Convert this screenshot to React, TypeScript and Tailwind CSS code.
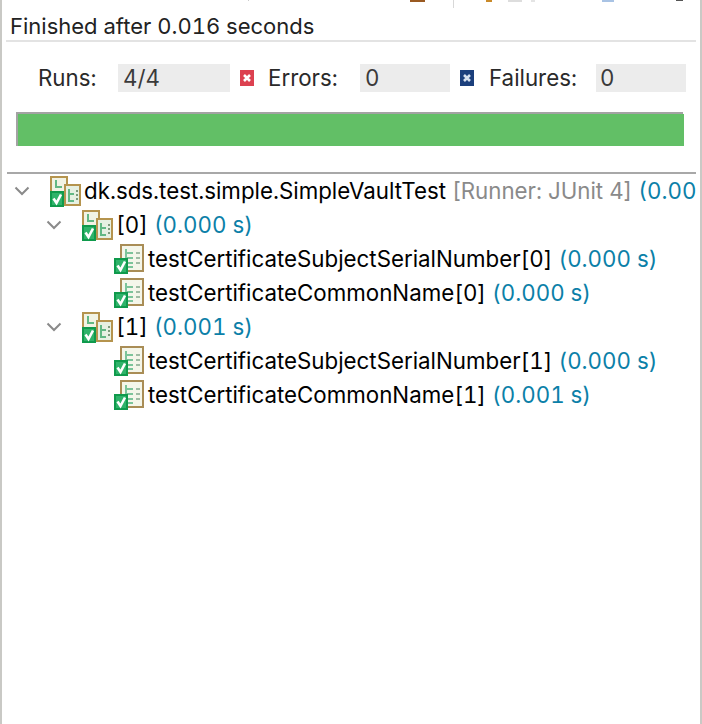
const font = { fontFamily: '"Inter", "Liberation Sans", sans-serif' };

function ChevronDown() {
  return (
    <svg width="16" height="10" viewBox="0 0 16 10" className="shrink-0">
      <path d="M1.5 1.5 L8 8 L14.5 1.5" fill="none" stroke="#8a8a8a" strokeWidth="2" />
    </svg>
  );
}

function SuiteIcon() {
  return (
    <svg width="31" height="31" viewBox="0 0 31 31" className="shrink-0">
      <rect x="1" y="1" width="16" height="17" fill="#f1f3e4" stroke="#b5944e" strokeWidth="2" />
      <path d="M6 4v7h6" fill="none" stroke="#62b884" strokeWidth="2" />
      <rect x="15" y="9" width="15" height="20" fill="#e6f0e2" stroke="#b5944e" strokeWidth="2" />
      <path d="M19 13v12h5M19 18h5" fill="none" stroke="#62b884" strokeWidth="2" />
      <path d="M26 15h2M26 19h2M26 23h2" stroke="#7d9a7c" strokeWidth="2" />
      <rect x="0" y="15" width="14" height="16" fill="#2fb36a" />
      <rect x="1" y="16" width="12" height="14" fill="none" stroke="#0f9a4c" strokeWidth="2" />
      <path d="M3.5 22.5 L6.5 27 L11 18.5" fill="none" stroke="#ffffff" strokeWidth="2.6" />
    </svg>
  );
}

function TestIcon() {
  return (
    <svg width="31" height="31" viewBox="0 0 31 31" className="shrink-0">
      <rect x="7" y="1" width="22" height="26" fill="#f4f6ea" stroke="#a98d56" strokeWidth="2" />
      <path d="M12 5v18h7M12 9h7M12 14h7M12 19h7" fill="none" stroke="#7cc49a" strokeWidth="2" />
      <path d="M22 9h4M22 14h4M22 19h4" stroke="#a0bca4" strokeWidth="2" />
      <rect x="0" y="14" width="14" height="16" fill="#2fb36a" />
      <rect x="1" y="15" width="12" height="14" fill="none" stroke="#0f9a4c" strokeWidth="2" />
      <path d="M3.5 21.5 L6.5 26 L11 17.5" fill="none" stroke="#ffffff" strokeWidth="2.6" />
    </svg>
  );
}

function XBox({ bg, fg }: { bg: string; fg: string }) {
  return (
    <svg width="14" height="16" viewBox="0 0 14 16" className="shrink-0">
      <rect width="14" height="16" fill={bg} />
      <path d="M4 5 L10 11 M10 5 L4 11" stroke={fg} strokeWidth="2.6" />
    </svg>
  );
}

function Row({ indent, icon, children }: { indent: string; icon: React.ReactNode; children: React.ReactNode }) {
  return (
    <div className={`h-[34px] flex items-center whitespace-nowrap ${indent}`}>
      {icon}
      <span className="ml-[3px] shrink-0 text-black">{children}</span>
    </div>
  );
}

const Time = ({ children }: { children: string }) => <span className="text-[#0b80a8]"> {children}</span>;

export default function App() {
  return (
    <div className="w-[702px] h-[724px] bg-white border-x-2 border-[#c9c9c5] overflow-hidden text-[22.3px] leading-none tabular-nums" style={font}>
      <div className="h-2 flex items-start">
        <span className="ml-[246px] w-px h-px bg-[#cccccc]" />
        <span className="ml-[161px] w-[15px] h-[2px] bg-[#9a5a22]" />
        <span className="ml-7 w-px h-2 bg-[#d8d8d8]" />
        <span className="ml-8 w-[6px] h-[2px] bg-[#c98a2a]" />
        <span className="ml-4 w-[14px] h-[2px] bg-[#dddddd]" />
        <span className="ml-[9px] w-1 h-[2px] bg-[#e4e4e4]" />
        <span className="ml-[67px] w-3 h-[2px] bg-[#a9c3e4]" />
        <span className="ml-[62px] w-[7px] h-px bg-[#555555]" />
      </div>
      <div className="h-[32px] flex items-center pt-1 pl-2 text-[22px] text-[#222222]">Finished after 0.016 seconds</div>
      <div className="mx-1 h-[2px] bg-[#e3e3e3]" />

      <div className="mt-[22px] flex items-center">
        <span className="ml-[36px] w-[80px] text-[#2a2a2a]">Runs:</span>
        <span className="w-[112px] h-7 flex items-center pl-[5px] bg-[#ececec] text-[#3a3a3a]">4/4</span>
        <div className="ml-[10px] flex items-center">
          <XBox bg="#dc4150" fg="#ffffff" />
          <span className="ml-[14px] w-[92px] text-[#2a2a2a]">Errors:</span>
          <span className="w-[90px] h-7 flex items-center pl-[5px] bg-[#ececec] text-[#3a3a3a]">0</span>
        </div>
        <div className="ml-[10px] flex items-center">
          <XBox bg="#1b3f7c" fg="#d6e0ee" />
          <span className="ml-[15px] w-[107px] text-[#2a2a2a]">Failures:</span>
          <span className="w-[90px] h-7 flex items-center pl-[4px] bg-[#ececec] text-[#3a3a3a]">0</span>
        </div>
      </div>

      <div className="mt-[20px] ml-[14px] w-[667px] h-[34px] border-t-2 border-l-2 border-[#a3a3a3]">
        <div className="h-8 -mr-px bg-[#62bf66]" />
      </div>

      <div className="mt-[26px] ml-[5px] mr-1 h-[2px] bg-[#a8a8a8]" />

      <div className="mr-[4px] overflow-hidden">
        <Row indent="pl-3" icon={<><ChevronDown /><span className="w-5 shrink-0" /><SuiteIcon /></>}>
          dk.sds.test.simple.SimpleVaultTest <span className="text-[#8a8a8a]">[Runner: JUnit 4]</span><Time>(0.000 s)</Time>
        </Row>
        <Row indent="pl-[44px]" icon={<><ChevronDown /><span className="w-5 shrink-0" /><SuiteIcon /></>}>
          [0]<Time>(0.000 s)</Time>
        </Row>
        <Row indent="pl-[112px]" icon={<TestIcon />}>
          testCertificateSubjectSerialNumber[0]<Time>(0.000 s)</Time>
        </Row>
        <Row indent="pl-[112px]" icon={<TestIcon />}>
          testCertificateCommonName[0]<Time>(0.000 s)</Time>
        </Row>
        <Row indent="pl-[44px]" icon={<><ChevronDown /><span className="w-5 shrink-0" /><SuiteIcon /></>}>
          [1]<Time>(0.001 s)</Time>
        </Row>
        <Row indent="pl-[112px]" icon={<TestIcon />}>
          testCertificateSubjectSerialNumber[1]<Time>(0.000 s)</Time>
        </Row>
        <Row indent="pl-[112px]" icon={<TestIcon />}>
          testCertificateCommonName[1]<Time>(0.001 s)</Time>
        </Row>
      </div>
    </div>
  );
}
